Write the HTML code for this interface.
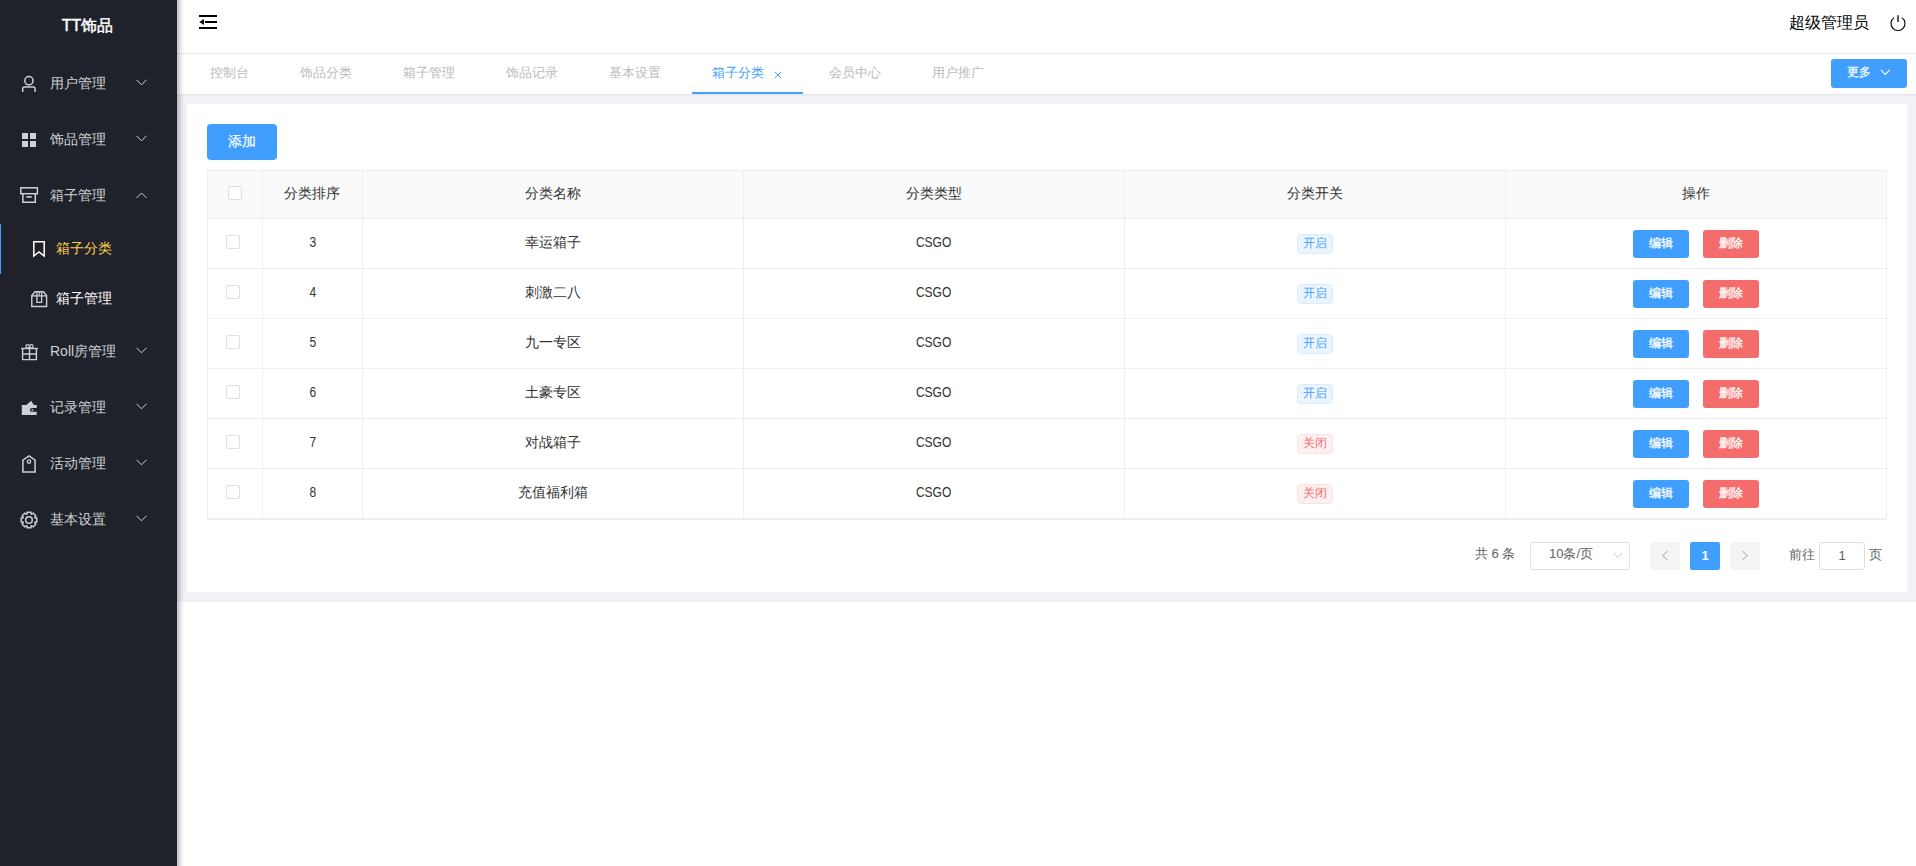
<!DOCTYPE html>
<html><head><meta charset="utf-8">
<style>
*{margin:0;padding:0;box-sizing:border-box;}
html,body{width:1916px;height:866px;overflow:hidden;background:#fff;font-family:"Liberation Sans",sans-serif;}
.a{position:absolute;white-space:nowrap;}
#side{position:absolute;left:0;top:0;width:177px;height:866px;background:#1f222a;}
.logo{left:0;width:175px;top:15px;text-align:center;color:#fff;font-size:16px;font-weight:normal;-webkit-text-stroke:0.45px #fff;line-height:22px;}
.mt{left:50px;color:#cfd0d3;font-size:14px;line-height:20px;}
.st{left:56px;color:#fff;font-size:14px;line-height:20px;}
.tab{top:63px;font-size:13px;line-height:20px;color:#bbb;}
.th{top:183px;font-size:14px;line-height:20px;color:#333;}
.td{font-size:14px;line-height:20px;color:#333;text-align:center;}
.cb{width:14px;height:14px;border:1px solid #dcdfe6;border-radius:2px;background:#fff;}
.tag{width:36px;height:20px;border-radius:4px;font-size:12px;line-height:16px;text-align:center;}
.tag.on{background:#ecf5ff;border:1px solid #d9ecff;color:#409eff;}
.tag.off{background:#fef0f0;border:1px solid #fde2e2;color:#f56c6c;}
.btn{width:56px;height:28px;border-radius:3px;font-size:12px;line-height:26px;text-align:center;color:#fff;-webkit-text-stroke:0.3px #fff;}
.btn.e{background:#409eff;left:1633px;}
.btn.d{background:#f56c6c;left:1703px;}
.cn{display:inline-block;transform:scaleX(.86);}
</style></head>
<body>
<div id="side">
  <div class="a logo">TT饰品</div>

  <!-- 用户管理 -->
  <svg class="a" style="left:20px;top:74px" width="18" height="19" viewBox="0 0 18 19"><circle cx="8.9" cy="6.7" r="4.1" fill="none" stroke="#cfd0d3" stroke-width="1.5"/><path d="M2.7 18 V14.8 Q2.7 13 4.5 13 H13.3 Q15.1 13 15.1 14.8 V18" fill="none" stroke="#cfd0d3" stroke-width="1.5"/></svg>
  <div class="a mt" style="top:73px">用户管理</div>
  <svg class="a" style="left:136px;top:79px" width="11" height="7" viewBox="0 0 11 7"><path d="M0.5 0.8 L5.5 5.8 L10.5 0.8" fill="none" stroke="#cfd0d3" stroke-width="1"/></svg>

  <!-- 饰品管理 -->
  <svg class="a" style="left:22px;top:133px" width="15" height="15" viewBox="0 0 15 15"><rect x="0" y="0" width="6" height="6" fill="#cfd0d3"/><rect x="8" y="0" width="6" height="6" fill="#cfd0d3"/><rect x="0" y="8" width="6" height="6" fill="#cfd0d3"/><rect x="8" y="8" width="6" height="6" fill="#cfd0d3"/></svg>
  <div class="a mt" style="top:129px">饰品管理</div>
  <svg class="a" style="left:136px;top:135px" width="11" height="7" viewBox="0 0 11 7"><path d="M0.5 0.8 L5.5 5.8 L10.5 0.8" fill="none" stroke="#cfd0d3" stroke-width="1"/></svg>

  <!-- 箱子管理 -->
  <svg class="a" style="left:20px;top:187px" width="19" height="17" viewBox="0 0 19 17"><rect x="0.8" y="0.8" width="16.6" height="5.9" fill="none" stroke="#cfd0d3" stroke-width="1.5"/><path d="M2.9 6.7 V15.2 H15.3 V6.7" fill="none" stroke="#cfd0d3" stroke-width="1.5"/><rect x="6.3" y="9.1" width="5.5" height="1.6" fill="#cfd0d3"/></svg>
  <div class="a mt" style="top:185px">箱子管理</div>
  <svg class="a" style="left:136px;top:192px" width="11" height="7" viewBox="0 0 11 7"><path d="M0.5 6 L5.5 1 L10.5 6" fill="none" stroke="#cfd0d3" stroke-width="1"/></svg>

  <!-- active bar -->
  <div class="a" style="left:0;top:224px;width:1px;height:50px;background:#409eff"></div>
  <svg class="a" style="left:33px;top:241px" width="13" height="17" viewBox="0 0 13 17"><path d="M0.8 0.8 H11.2 V15 L6 11 L0.8 15 Z" fill="none" stroke="#fff" stroke-width="1.5" stroke-linejoin="miter"/></svg>
  <div class="a st" style="top:238px;color:#ffd04b">箱子分类</div>

  <svg class="a" style="left:31px;top:290px" width="17" height="18" viewBox="0 0 17 18"><path d="M0.8 16.5 V5.6 L4 1.7 H12.4 L15.6 5.6 V16.5 Z" fill="none" stroke="#cfd0d3" stroke-width="1.4"/><path d="M0.8 5.9 H15.6" stroke="#cfd0d3" stroke-width="1.3"/><path d="M5.9 1.7 V12.4 H10.6 V1.7" fill="none" stroke="#cfd0d3" stroke-width="1.3"/><path d="M8.25 1.7 V5.9" stroke="#cfd0d3" stroke-width="1"/></svg>
  <div class="a st" style="top:288px">箱子管理</div>

  <!-- Roll房管理 -->
  <svg class="a" style="left:20px;top:342px" width="19" height="20" viewBox="0 0 19 20"><path d="M1 6.5 H18" stroke="#cfd0d3" stroke-width="1.4"/><path d="M2.6 6.5 V17.6 H16.4 V6.5" fill="none" stroke="#cfd0d3" stroke-width="1.4"/><path d="M2.6 12 H16.4 M9.5 6.5 V17.6" stroke="#cfd0d3" stroke-width="1.4"/><circle cx="7.6" cy="4.3" r="1.7" fill="none" stroke="#cfd0d3" stroke-width="1.2"/><circle cx="11.4" cy="4.3" r="1.7" fill="none" stroke="#cfd0d3" stroke-width="1.2"/></svg>
  <div class="a mt" style="top:341px">Roll房管理</div>
  <svg class="a" style="left:136px;top:347px" width="11" height="7" viewBox="0 0 11 7"><path d="M0.5 0.8 L5.5 5.8 L10.5 0.8" fill="none" stroke="#cfd0d3" stroke-width="1"/></svg>

  <!-- 记录管理 -->
  <svg class="a" style="left:21px;top:400px" width="17" height="16" viewBox="0 0 17 16"><path d="M0.8 5 H5.4 L10.2 0.8 L12.8 5 H15.7 V8 H10.8 A1.9 1.9 0 0 0 10.8 11.8 H15.7 V15 H0.8 Z" fill="#cfd0d3"/><circle cx="11.3" cy="9.9" r="0.9" fill="#cfd0d3"/></svg>
  <div class="a mt" style="top:397px">记录管理</div>
  <svg class="a" style="left:136px;top:403px" width="11" height="7" viewBox="0 0 11 7"><path d="M0.5 0.8 L5.5 5.8 L10.5 0.8" fill="none" stroke="#cfd0d3" stroke-width="1"/></svg>

  <!-- 活动管理 -->
  <svg class="a" style="left:21px;top:455px" width="16" height="19" viewBox="0 0 16 19"><path d="M1.9 17 V5.2 L8 1 L14.1 5.2 V17 Z" fill="none" stroke="#cfd0d3" stroke-width="1.5" stroke-linejoin="miter"/><circle cx="8" cy="6.6" r="1.7" fill="none" stroke="#cfd0d3" stroke-width="1.3"/></svg>
  <div class="a mt" style="top:453px">活动管理</div>
  <svg class="a" style="left:136px;top:459px" width="11" height="7" viewBox="0 0 11 7"><path d="M0.5 0.8 L5.5 5.8 L10.5 0.8" fill="none" stroke="#cfd0d3" stroke-width="1"/></svg>

  <!-- 基本设置 -->
  <svg class="a" style="left:20px;top:511px" width="18" height="18" viewBox="0 0 18 18"><path d="M6.68 3.25 L7.20 1.21 L10.80 1.21 L11.32 3.25 L11.42 3.29 L13.24 2.22 L15.78 4.76 L14.71 6.58 L14.75 6.68 L16.79 7.20 L16.79 10.80 L14.75 11.32 L14.71 11.42 L15.78 13.24 L13.24 15.78 L11.42 14.71 L11.32 14.75 L10.80 16.79 L7.20 16.79 L6.68 14.75 L6.58 14.71 L4.76 15.78 L2.22 13.24 L3.29 11.42 L3.25 11.32 L1.21 10.80 L1.21 7.20 L3.25 6.68 L3.29 6.58 L2.22 4.76 L4.76 2.22 L6.58 3.29 Z" fill="none" stroke="#cfd0d3" stroke-width="1.5" stroke-linejoin="miter"/><circle cx="9" cy="9" r="3.3" fill="none" stroke="#cfd0d3" stroke-width="1.5"/></svg>
  <div class="a mt" style="top:509px">基本设置</div>
  <svg class="a" style="left:136px;top:515px" width="11" height="7" viewBox="0 0 11 7"><path d="M0.5 0.8 L5.5 5.8 L10.5 0.8" fill="none" stroke="#cfd0d3" stroke-width="1"/></svg>
</div>

<!-- header -->
<div class="a" style="left:177px;top:53px;width:1739px;height:1px;background:#eaeaea"></div>
<svg class="a" style="left:198px;top:14px" width="20" height="16" viewBox="0 0 20 16"><rect x="1" y="1" width="18" height="2" fill="#000"/><rect x="7" y="7" width="12" height="2" fill="#000"/><rect x="1" y="13" width="18" height="2" fill="#000"/><path d="M1.3 8 L6 5 V11 Z" fill="#000"/></svg>
<div class="a" style="left:1789px;top:13px;font-size:16px;line-height:20px;color:#000">超级管理员</div>
<svg class="a" style="left:1889px;top:14px" width="18" height="18" viewBox="0 0 18 18"><path d="M5.2 3.6 A7 7 0 1 0 12.8 3.6" fill="none" stroke="#000" stroke-width="1.1"/><path d="M9 1.2 V8" stroke="#000" stroke-width="1.3"/></svg>

<!-- tabs -->
<div class="a tab" style="left:210px">控制台</div>
<div class="a tab" style="left:300px">饰品分类</div>
<div class="a tab" style="left:403px">箱子管理</div>
<div class="a tab" style="left:506px">饰品记录</div>
<div class="a tab" style="left:609px">基本设置</div>
<div class="a tab" style="left:712px;color:#409eff">箱子分类</div>
<svg class="a" style="left:774px;top:71px" width="8" height="8" viewBox="0 0 8 8"><path d="M0.8 0.8 L7.2 7.2 M7.2 0.8 L0.8 7.2" stroke="#409eff" stroke-width="0.95"/></svg>
<div class="a" style="left:692px;top:92px;width:111px;height:2px;background:#409eff"></div>
<div class="a tab" style="left:829px">会员中心</div>
<div class="a tab" style="left:932px">用户推广</div>
<div class="a" style="left:1831px;top:59px;width:76px;height:29px;background:#409eff;border-radius:3px"></div>
<div class="a" style="left:1847px;top:62px;font-size:12px;line-height:20px;color:#fff;-webkit-text-stroke:0.2px #fff">更多</div>
<svg class="a" style="left:1880px;top:69px" width="11" height="7" viewBox="0 0 11 7"><path d="M0.8 0.8 L5.3 5.5 L9.8 0.8" fill="none" stroke="#fff" stroke-width="1.1"/></svg>

<!-- gray area -->
<div class="a" style="left:177px;top:94px;width:1739px;height:508px;background:#f0f2f5"></div>
<div class="a" style="left:187px;top:104px;width:1720px;height:488px;background:#fff"></div>
<div class="a" style="left:177px;top:94px;width:1739px;height:1px;background:#e4e7ed"></div>
<div class="a" style="left:177px;top:95px;width:1739px;height:1px;background:#eceef2"></div>

<!-- add btn -->
<div class="a" style="left:207px;top:124px;width:70px;height:36px;background:#409eff;border-radius:4px;color:#fff;font-size:14px;line-height:34px;text-align:center;-webkit-text-stroke:0.2px #fff">添加</div>

<!-- table -->
<div class="a" style="left:207px;top:170px;width:1680px;height:350px;border:1px solid #ebeef5;"></div>
<div class="a" style="left:208px;top:171px;width:1678px;height:47px;background:#fafafa"></div>
<div id="tbl">
<div class="a" style="left:262px;top:171px;width:1px;height:347px;background:#ebeef5"></div>
<div class="a" style="left:362px;top:171px;width:1px;height:347px;background:#ebeef5"></div>
<div class="a" style="left:743px;top:171px;width:1px;height:347px;background:#ebeef5"></div>
<div class="a" style="left:1124px;top:171px;width:1px;height:347px;background:#ebeef5"></div>
<div class="a" style="left:1505px;top:171px;width:1px;height:347px;background:#ebeef5"></div>
<div class="a" style="left:208px;top:218px;width:1678px;height:1px;background:#ebeef5"></div>
<div class="a" style="left:208px;top:268px;width:1678px;height:1px;background:#ebeef5"></div>
<div class="a" style="left:208px;top:318px;width:1678px;height:1px;background:#ebeef5"></div>
<div class="a" style="left:208px;top:368px;width:1678px;height:1px;background:#ebeef5"></div>
<div class="a" style="left:208px;top:418px;width:1678px;height:1px;background:#ebeef5"></div>
<div class="a" style="left:208px;top:468px;width:1678px;height:1px;background:#ebeef5"></div>
<div class="a" style="left:208px;top:518px;width:1678px;height:1px;background:#ebeef5"></div>
<div class="a cb" style="left:228px;top:186px"></div>
<div class="a th" style="left:262px;width:100px;text-align:center">分类排序</div>
<div class="a th" style="left:362px;width:381px;text-align:center">分类名称</div>
<div class="a th" style="left:743px;width:381px;text-align:center">分类类型</div>
<div class="a th" style="left:1124px;width:381px;text-align:center">分类开关</div>
<div class="a th" style="left:1505px;width:381px;text-align:center">操作</div>
<div class="a cb" style="left:226px;top:235px"></div>
<div class="a td" style="left:263px;width:100px;top:232px"><span class="cn">3</span></div>
<div class="a td" style="left:362px;width:381px;top:232px">幸运箱子</div>
<div class="a td" style="left:743px;width:381px;top:232px"><span class="cn">CSGO</span></div>
<div class="a tag on" style="left:1297px;top:234px">开启</div>
<div class="a btn e" style="top:230px">编辑</div>
<div class="a btn d" style="top:230px">删除</div>
<div class="a cb" style="left:226px;top:285px"></div>
<div class="a td" style="left:263px;width:100px;top:282px"><span class="cn">4</span></div>
<div class="a td" style="left:362px;width:381px;top:282px">刺激二八</div>
<div class="a td" style="left:743px;width:381px;top:282px"><span class="cn">CSGO</span></div>
<div class="a tag on" style="left:1297px;top:284px">开启</div>
<div class="a btn e" style="top:280px">编辑</div>
<div class="a btn d" style="top:280px">删除</div>
<div class="a cb" style="left:226px;top:335px"></div>
<div class="a td" style="left:263px;width:100px;top:332px"><span class="cn">5</span></div>
<div class="a td" style="left:362px;width:381px;top:332px">九一专区</div>
<div class="a td" style="left:743px;width:381px;top:332px"><span class="cn">CSGO</span></div>
<div class="a tag on" style="left:1297px;top:334px">开启</div>
<div class="a btn e" style="top:330px">编辑</div>
<div class="a btn d" style="top:330px">删除</div>
<div class="a cb" style="left:226px;top:385px"></div>
<div class="a td" style="left:263px;width:100px;top:382px"><span class="cn">6</span></div>
<div class="a td" style="left:362px;width:381px;top:382px">土豪专区</div>
<div class="a td" style="left:743px;width:381px;top:382px"><span class="cn">CSGO</span></div>
<div class="a tag on" style="left:1297px;top:384px">开启</div>
<div class="a btn e" style="top:380px">编辑</div>
<div class="a btn d" style="top:380px">删除</div>
<div class="a cb" style="left:226px;top:435px"></div>
<div class="a td" style="left:263px;width:100px;top:432px"><span class="cn">7</span></div>
<div class="a td" style="left:362px;width:381px;top:432px">对战箱子</div>
<div class="a td" style="left:743px;width:381px;top:432px"><span class="cn">CSGO</span></div>
<div class="a tag off" style="left:1297px;top:434px">关闭</div>
<div class="a btn e" style="top:430px">编辑</div>
<div class="a btn d" style="top:430px">删除</div>
<div class="a cb" style="left:226px;top:485px"></div>
<div class="a td" style="left:263px;width:100px;top:482px"><span class="cn">8</span></div>
<div class="a td" style="left:362px;width:381px;top:482px">充值福利箱</div>
<div class="a td" style="left:743px;width:381px;top:482px"><span class="cn">CSGO</span></div>
<div class="a tag off" style="left:1297px;top:484px">关闭</div>
<div class="a btn e" style="top:480px">编辑</div>
<div class="a btn d" style="top:480px">删除</div>
<div class="a" style="left:1475px;top:544px;font-size:13px;line-height:20px;color:#606266">共 6 条</div>
<div class="a" style="left:1530px;top:542px;width:100px;height:28px;border:1px solid #dcdfe6;border-radius:3px"></div>
<div class="a" style="left:1549px;top:544px;font-size:13px;line-height:20px;color:#606266">10条/页</div>
<svg class="a" style="left:1613px;top:552px" width="10" height="7" viewBox="0 0 10 7"><path d="M0.8 1 L4.8 5.5 L8.8 1" fill="none" stroke="#c0c4cc" stroke-width="1"/></svg>
<div class="a" style="left:1650px;top:542px;width:30px;height:28px;background:#f4f4f5;border-radius:2px"></div>
<svg class="a" style="left:1661px;top:550px" width="8" height="11" viewBox="0 0 8 11"><path d="M6.5 1 L1.8 5.5 L6.5 10" fill="none" stroke="#c0c4cc" stroke-width="1.3"/></svg>
<div class="a" style="left:1690px;top:542px;width:30px;height:28px;background:#409eff;border-radius:2px;color:#fff;font-size:13px;font-weight:bold;line-height:28px;text-align:center">1</div>
<div class="a" style="left:1730px;top:542px;width:30px;height:28px;background:#f4f4f5;border-radius:2px"></div>
<svg class="a" style="left:1741px;top:550px" width="8" height="11" viewBox="0 0 8 11"><path d="M1.5 1 L6.2 5.5 L1.5 10" fill="none" stroke="#c0c4cc" stroke-width="1.3"/></svg>
<div class="a" style="left:1789px;top:545px;font-size:13px;line-height:20px;color:#606266">前往</div>
<div class="a" style="left:1819px;top:542px;width:46px;height:28px;border:1px solid #dcdfe6;border-radius:3px;font-size:13px;line-height:26px;text-align:center;color:#606266">1</div>
<div class="a" style="left:1869px;top:545px;font-size:13px;line-height:20px;color:#606266">页</div>
</div><!--/tbl-->

<!-- shadow -->
<div class="a" style="left:-10px;top:-20px;width:187px;height:906px;box-shadow:2px 0 6px rgba(0,21,41,.35)"></div>
</body></html>
